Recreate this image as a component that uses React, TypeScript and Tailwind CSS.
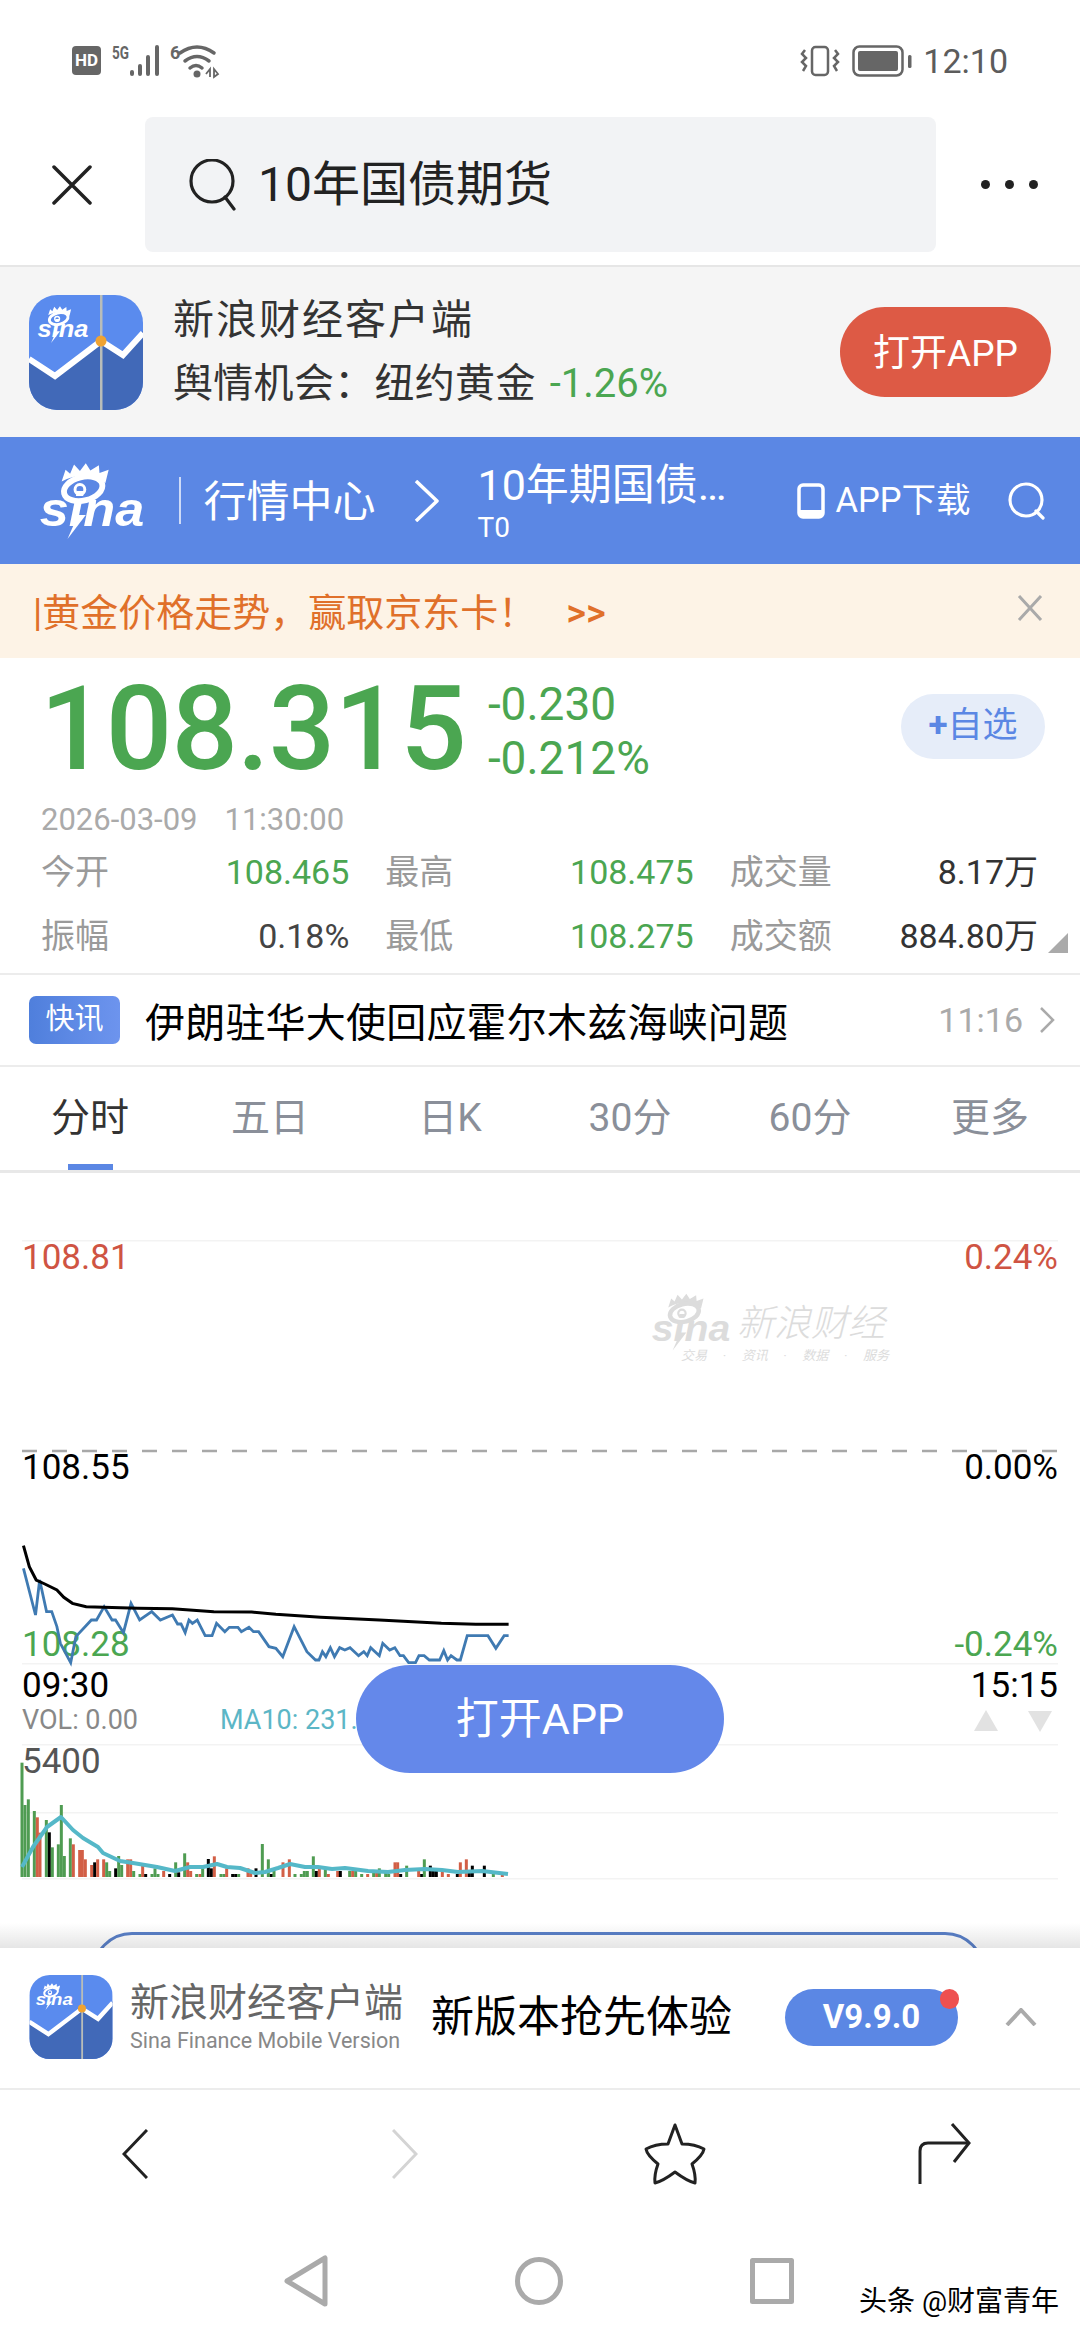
import React from 'react'

const GREEN = '#4ba651'

// chart points are read off the 2.9x / 3x crops, mapped back to page pixels
const pricePts = [[68,265],[103,405],[115,300],[135,395],[150,395],[165,440],[175,490],[205,548],[220,470],[265,420],[280,420],[302,380],[325,420],[335,420],[358,458],[380,370],[405,420],[440,395],[465,420],[500,405],[515,432],[525,432],[537,458],[548,420],[558,430],[572,420],[595,467],[615,467],[628,430],[652,455],[665,442],[690,442],[700,455],[722,442],[735,455],[750,455],[780,500],[800,505],[820,530],[853,440],[890,515],[915,540],[925,540],[935,515],[945,530],[958,503],[970,530],[985,503],[1000,510],[1015,503],[1040,527],[1055,515],[1065,527],[1075,503],[1100,527],[1110,490],[1130,510],[1145,503],[1160,527],[1170,527],[1185,548],[1205,548],[1215,527],[1230,527],[1245,540],[1275,540],[1287,512],[1298,540],[1308,527],[1325,540],[1335,540],[1355,467],[1415,467],[1438,505],[1462,467],[1475,467]]
const avgPts = [[68,197],[85,260],[105,300],[130,312],[165,330],[185,352],[210,370],[250,380],[300,382],[400,385],[500,386],[620,395],[730,396],[800,403],[930,412],[1100,420],[1280,430],[1380,433],[1475,433]]
const toLine = (pts: number[][]) => pts.map(([x, y]) => `${x / 2.9},${1480 + y / 3}`).join(' ')

const volLeft: [number, number, string][] = [[66,68,'g'],[75,195,'g'],[85,178,'g'],[103,213,'g'],[112,232,'r'],[120,278,'r'],[139,240,'g'],[148,277,'k'],[157,322,'g'],[175,313,'g'],[184,195,'g'],[193,348,'g'],[211,295,'g'],[220,313,'r'],[239,330,'r'],[247,330,'r'],[256,358,'r'],[275,375,'r'],[284,367,'k'],[293,358,'r'],[311,358,'r'],[320,367,'g'],[329,393,'g'],[347,385,'k'],[356,348,'g'],[365,375,'g'],[383,358,'r'],[392,358,'r'],[401,393,'g'],[420,402,'g'],[428,378,'r'],[437,402,'k'],[456,402,'g'],[465,385,'g'],[474,402,'g'],[491,393,'r'],[509,402,'k'],[527,367,'g'],[536,397,'k'],[554,340,'g'],[563,367,'r'],[572,393,'r'],[590,402,'g'],[600,402,'r'],[608,385,'g'],[625,357,'k'],[634,385,'k'],[643,349,'r'],[663,402,'g'],[672,402,'g'],[680,385,'r'],[698,402,'k'],[707,402,'k'],[716,402,'g'],[744,385,'r'],[752,393,'r']]
const volRight: [number, number, string][] = [[3,385,'k'],[22,312,'g'],[40,358,'g'],[49,402,'k'],[57,393,'g'],[84,367,'r'],[103,358,'r'],[120,402,'g'],[139,402,'g'],[148,393,'g'],[157,393,'g'],[175,349,'g'],[184,393,'k'],[193,385,'r'],[211,385,'g'],[220,402,'r'],[248,393,'r'],[256,393,'k'],[284,393,'g'],[293,393,'r'],[302,393,'g'],[320,402,'g'],[338,402,'r'],[356,393,'g'],[365,393,'r'],[373,385,'g'],[392,393,'g'],[401,402,'g'],[420,367,'r'],[428,367,'r'],[437,402,'k'],[455,377,'g'],[491,393,'r'],[500,402,'k'],[508,358,'g'],[526,377,'k'],[535,393,'k'],[544,393,'k'],[562,393,'r'],[580,402,'r'],[607,402,'k'],[616,367,'r'],[634,358,'r'],[643,393,'k'],[652,377,'k'],[688,377,'k'],[715,402,'g'],[742,402,'r']]
const volColor: Record<string, string> = { g: '#4f9c52', r: '#d25f46', k: '#000000' }
const volBars = [
  ...volLeft.map(([x, top, c]) => ({ x: x / 3, top, c })),
  ...volRight.map(([x, top, c]) => ({ x: 255 + x / 3, top, c })),
]
const maPts = [[22,1867],[33,1847],[47,1827],[61,1817],[73,1830],[83,1838],[98,1847],[103,1853],[120,1861],[133,1863],[157,1867],[175,1871],[190,1867],[203,1867],[217,1864],[227,1867],[240,1868],[255,1873],[265,1872],[278,1868],[290,1864],[305,1867],[318,1867],[332,1869],[345,1868],[368,1871],[388,1872],[405,1870],[425,1869],[442,1870],[458,1872],[482,1871],[508,1874]]

const SinaLogo = (props: React.SVGProps<SVGSVGElement>) => (
  <svg viewBox="45 25 340 245" fill="currentColor" {...props}>
    <path d="M122 88 L134 52 L148 64 L160 36 L178 56 L196 32 L210 54 L236 38 L238 62 L266 52 L256 92 Q190 50 122 88Z" />
    <ellipse cx="188" cy="110" rx="60" ry="36" fill="none" stroke="currentColor" strokeWidth="18" transform="rotate(-14 188 110)" />
    <circle cx="178" cy="112" r="15" fill="none" stroke="currentColor" strokeWidth="9" />
    <path d="M172 190 L140 264 L196 190Z" />
    <text x="55" y="224" fontFamily="'Liberation Sans',sans-serif" fontWeight="700" fontStyle="italic" fontSize="150" textLength="320" lengthAdjust="spacingAndGlyphs">sina</text>
  </svg>
)

const AppIcon = ({ className }: { className: string }) => (
  <svg viewBox="0 0 114 115" className={className}>
    <defs>
      <clipPath id="sq"><rect width="114" height="115" rx="28" /></clipPath>
    </defs>
    <g clipPath="url(#sq)">
      <rect width="114" height="115" fill="#5a8bee" />
      <polygon points="0,64 26,81 72,46 94,58 114,36 114,115 0,115" fill="#4169b8" />
      <polyline points="0,64 26,81 72,46 94,60 114,38" fill="none" stroke="#fff" strokeWidth="6" />
      <rect x="71" width="2.5" height="115" fill="#b8bdb9" />
      <circle cx="72" cy="46" r="5.5" fill="#f0a332" />
    </g>
    <SinaLogo x="7" y="10" width="54" height="39" color="#fff" />
  </svg>
)

function StatusBar() {
  return (
    <div className="h-[105px] shrink-0 flex items-center justify-between pl-[72px] pr-[72px] pt-[16px] text-[#666]">
      <div className="flex items-center">
        <div className="w-[29px] h-[29px] rounded-[4px] bg-[#666] text-white text-[17px] leading-none font-bold flex items-center justify-center">HD</div>
        <svg width="116" height="36" viewBox="0 0 116 36" className="ml-[9px] overflow-visible" fill="#666">
          <text x="2" y="16" fontSize="18" fontWeight="700" fontFamily="Roboto" textLength="17" lengthAdjust="spacingAndGlyphs">5G</text>
          <rect x="20" y="27" width="4" height="6" rx="2" />
          <rect x="28" y="21" width="4" height="12" rx="2" />
          <rect x="36" y="12" width="4" height="21" rx="2" />
          <rect x="45" y="2" width="4" height="31" rx="2" />
          <text x="60" y="16" fontSize="18" fontWeight="700" fontFamily="Roboto">6</text>
          <path d="M70 10 Q87 -2 104 10 M75 18 Q87 9 99 18 M80 25 Q86 20 92 25" fill="none" stroke="#666" strokeWidth="3.5" strokeLinecap="round" />
          <circle cx="87" cy="31" r="3.5" />
          <path d="M96 31 L100 26 V34 M104 26 V34 L108 31Z" fill="none" stroke="#666" strokeWidth="1.8" />
        </svg>
      </div>
      <div className="flex items-center">
        <svg width="40" height="32" viewBox="0 0 40 32" fill="none" stroke="#666" strokeWidth="2.5">
          <rect x="12" y="2" width="16" height="28" rx="3.5" />
          <path d="M5 5 L2 9 L6 13 L2 17 L6 21 L3 26 M35 5 L38 9 L34 13 L38 17 L34 21 L37 26" />
        </svg>
        <svg width="60" height="32" viewBox="0 0 60 32" className="ml-[12px]">
          <rect x="1.5" y="1.5" width="49" height="29" rx="6" fill="none" stroke="#666" strokeWidth="2.5" />
          <rect x="6" y="6" width="40" height="20" rx="2" fill="#666" />
          <rect x="56" y="10" width="3.5" height="13" rx="1.5" fill="#666" />
        </svg>
        <span className="ml-[11px] text-[34px] leading-none text-[#5c5c5c]">12:10</span>
      </div>
    </div>
  )
}

function Toolbar() {
  return (
    <div className="h-[162px] shrink-0 flex items-start pt-[12px] border-b-2 border-[#e6e6e6]">
      <div className="w-[145px] h-[135px] flex items-center pl-[52px]">
        <svg width="40" height="40" viewBox="0 0 40 40" stroke="#222" strokeWidth="3.5" strokeLinecap="round">
          <path d="M2 2 L38 38 M38 2 L2 38" />
        </svg>
      </div>
      <div className="w-[791px] h-[135px] rounded-[8px] bg-[#f2f3f5] flex items-center pl-[44px]">
        <svg width="48" height="52" viewBox="0 0 48 52" fill="none" stroke="#222" strokeWidth="3.2">
          <circle cx="23" cy="22" r="21" />
          <path d="M36 38 L45 50" strokeLinecap="round" />
        </svg>
        <span className="ml-[21px] text-[48px] leading-none text-[#222]">10年国债期货</span>
      </div>
      <div className="flex-1 h-[135px] flex items-center justify-center gap-[15px] pl-[2px]">
        <i className="w-[9px] h-[9px] rounded-full bg-[#222]" />
        <i className="w-[9px] h-[9px] rounded-full bg-[#222]" />
        <i className="w-[9px] h-[9px] rounded-full bg-[#222]" />
      </div>
    </div>
  )
}

function AppBanner() {
  return (
    <div className="h-[170px] shrink-0 bg-[#f5f5f5] flex items-center pl-[29px] pr-[29px]">
      <AppIcon className="w-[114px] h-[115px] shrink-0" />
      <div className="ml-[30px] flex-1 text-[#333]">
        <div className="text-[41px] leading-[52px] tracking-[2px]">新浪财经客户端</div>
        <div className="mt-[12px] text-[40px] tracking-[0.3px] leading-[52px] flex items-center">
          舆情机会{'\uFF1A'}纽约黄金
          <span className="ml-[14px] text-[40px] tracking-normal" style={{ color: GREEN }}>-1.26%</span>
        </div>
      </div>
      <div className="w-[211px] h-[90px] rounded-[45px] bg-[#dd5a45] text-white text-[37px] flex items-center justify-center pt-[4px]">打开APP</div>
    </div>
  )
}

function SiteHeader() {
  return (
    <div className="h-[127px] shrink-0 bg-[#5b87e4] text-white flex items-center pl-[36px]">
      <SinaLogo className="w-[112px] h-[80px] shrink-0" />
      <div className="ml-[31px] w-[1.5px] h-[47px] bg-white/70" />
      <span className="ml-[23px] text-[43px] leading-none pt-[3px]">行情中心</span>
      <svg width="26" height="42" viewBox="0 0 26 42" fill="none" stroke="#fff" strokeWidth="3.5" className="ml-[38px]">
        <path d="M2 1 L23 21 L2 41" strokeLinejoin="round" />
      </svg>
      <div className="ml-[38px] w-[252px] shrink-0 pt-[3px]">
        <div className="text-[43px] leading-[48px] whitespace-nowrap">10年期国债…</div>
        <div className="text-[28px] leading-[30px] mt-[4px]">T0</div>
      </div>
      <svg width="28" height="36" viewBox="0 0 28 36" fill="none" className="ml-[67px]">
        <rect x="2" y="2" width="24" height="32" rx="4" stroke="#fff" strokeWidth="3.5" />
        <rect x="2" y="27" width="24" height="7" fill="#fff" />
      </svg>
      <span className="ml-[11px] text-[34.5px] leading-none whitespace-nowrap">APP下载</span>
      <svg width="38" height="38" viewBox="0 0 38 38" fill="none" stroke="#fff" strokeWidth="3.2" className="ml-[37px]">
        <circle cx="18" cy="18" r="16" />
        <path d="M28 29 L35 36" strokeLinecap="round" />
      </svg>
    </div>
  )
}

function NoticeBar() {
  return (
    <div className="h-[94px] shrink-0 bg-[#fdf3e6] flex items-center pl-[33px] pr-[37px] justify-between">
      <span className="text-[38px] leading-none text-[#e0702a] whitespace-nowrap pt-[4px]">|黄金价格走势{'\uFF0C'}赢取京东卡{'\uFF01'}<span className="ml-[30px] text-[38px] font-medium">&gt;&gt;</span></span>
      <svg width="26" height="26" viewBox="0 0 26 26" stroke="#aaa" strokeWidth="3" className="-mt-[6px]">
        <path d="M2 1 L24 25 M24 1 L2 25" />
      </svg>
    </div>
  )
}

const Stat = ({ label, value, color }: { label: string; value: string; color: string }) => (
  <div className="flex items-center justify-between h-[64px]">
    <span className="text-[34px] leading-none text-[#9a9a9a]">{label}</span>
    <span className="text-[34px] leading-none" style={{ color }}>{value}</span>
  </div>
)

function Quote() {
  return (
    <div className="h-[315px] shrink-0 relative flex flex-col">
      <div className="h-[140px] flex items-center pl-[40px] pr-[35px] pt-[2px]">
        <span className="text-[117px] leading-none font-medium tracking-[-0.8px]" style={{ color: GREEN }}>108.315</span>
        <div className="ml-[22px] flex-1 text-[46px] leading-[54px] pt-[4px]" style={{ color: GREEN }}>
          <div>-0.230</div>
          <div>-0.212%</div>
        </div>
        <div className="w-[144px] h-[65px] -mt-[6px] rounded-[33px] bg-[#e6edf9] text-[#5b87e4] text-[35px] flex items-center justify-center">
          <span className="font-bold">+</span>自选
        </div>
      </div>
      <div className="h-[42px] flex items-center pl-[41px] text-[31px] text-[#aaa] leading-none">
        <span>2026-03-09</span>
        <span className="ml-[27px]">11:30:00</span>
      </div>
      <div className="grid grid-cols-3 gap-x-[36px] pl-[41px] pr-[42px]">
        <Stat label="今开" value="108.465" color={GREEN} />
        <Stat label="最高" value="108.475" color={GREEN} />
        <Stat label="成交量" value="8.17万" color="#333" />
        <Stat label="振幅" value="0.18%" color="#444" />
        <Stat label="最低" value="108.275" color={GREEN} />
        <Stat label="成交额" value="884.80万" color="#333" />
      </div>
      <svg width="20" height="20" viewBox="0 0 20 20" className="absolute left-[1048px] top-[275px]">
        <polygon points="20,0 20,20 0,20" fill="#aaa" />
      </svg>
    </div>
  )
}

function NewsRow() {
  return (
    <div className="h-[92px] shrink-0 border-t-2 border-[#ececec] flex items-center pl-[29px] pr-[25px]">
      <div className="w-[91px] h-[48px] rounded-[7px] bg-gradient-to-r from-[#4f7fdc] to-[#6d94ee] text-white text-[29px] flex items-center justify-center">快讯</div>
      <span className="ml-[25px] flex-1 text-[40px] tracking-[0.2px] leading-none text-black pt-[8px]">伊朗驻华大使回应霍尔木兹海峡问题</span>
      <span className="text-[34px] leading-none text-[#aaa]">11:16</span>
      <svg width="16" height="26" viewBox="0 0 16 26" fill="none" stroke="#aaa" strokeWidth="2.5" className="ml-[16px]">
        <path d="M2 1 L14 13 L2 25" />
      </svg>
    </div>
  )
}

const tabs = ['分时', '五日', '日K', '30分', '60分', '更多']

function Tabs() {
  return (
    <div className="h-[108px] shrink-0 border-t-2 border-[#ececec] border-b-[3px] border-b-[#e8e8e8] grid grid-cols-6">
      {tabs.map((t, i) => (
        <div key={t} className={`relative flex items-center justify-center text-[39px] leading-none ${i === 0 ? 'text-[#333]' : 'text-[#8a8f99]'}`}>
          {t}
          {i === 0 && <div className="absolute bottom-0 left-[68px] w-[45px] h-[6px] bg-[#5b87e4]" />}
        </div>
      ))}
    </div>
  )
}

function Chart() {
  const label = 'absolute text-[35px] leading-[40px]'
  return (
    <div className="relative h-[775px] shrink-0 overflow-hidden">
      <span className={`${label} left-[22px] top-[65px] text-[#cf5443]`}>108.81</span>
      <span className={`${label} right-[22px] top-[65px] text-[#cf5443]`}>0.24%</span>
      <span className={`${label} left-[22px] top-[275px] text-black`}>108.55</span>
      <span className={`${label} right-[22px] top-[275px] text-black`}>0.00%</span>
      <span className={`${label} left-[22px] top-[452px] text-[#4ba651]`}>108.28</span>
      <span className={`${label} right-[22px] top-[452px] text-[#4ba651]`}>-0.24%</span>
      <span className={`${label} left-[22px] top-[493px] text-black`}>09:30</span>
      <span className={`${label} right-[22px] top-[493px] text-black`}>15:15</span>
      <span className="absolute left-[22px] top-[527px] text-[27px] leading-[40px] text-[#888]">VOL: 0.00</span>
      <span className="absolute left-[220px] top-[527px] text-[27px] leading-[40px] text-[#5cb6c6]">MA10: 231.88</span>
      <span className={`${label} left-[22px] top-[569px] text-[#555]`}>5400</span>

      <svg viewBox="0 1173 1080 775" className="absolute inset-0 w-full h-full">
        {[1240, 1663, 1744, 1812, 1878].map((y) => (
          <rect key={y} x="22" y={y} width="1036" height="1.5" fill="#f3f3f3" />
        ))}
        <line x1="22" y1="1451" x2="1058" y2="1451" stroke="#a8a8a8" strokeWidth="2.5" strokeDasharray="15 15" />
        <polyline points={toLine(pricePts)} fill="none" stroke="#3f7ab2" strokeWidth="2.8" />
        <polyline points={toLine(avgPts)} fill="none" stroke="#000" strokeWidth="3" />
        {volBars.map((b, i) => (
          <rect key={i} x={b.x - 1.5} y={1740 + b.top / 3} width="3" height={1877 - (1740 + b.top / 3)} fill={volColor[b.c]} />
        ))}
        <polyline points={maPts.map((p) => p.join(',')).join(' ')} fill="none" stroke="#55b8c8" strokeWidth="4" strokeLinejoin="round" />
        <polygon points="986,1710 998,1731 974,1731" fill="#e2e2e2" />
        <polygon points="1028,1711 1052,1711 1040,1732" fill="#e2e2e2" />
      </svg>

      <div className="absolute left-[649px] top-[119px] w-[240px] text-[#dcdcdc]">
        <div className="flex items-end">
          <SinaLogo className="w-[84px] h-[60px] shrink-0" />
          <span className="ml-[4px] text-[37px] leading-none italic font-light whitespace-nowrap pb-[10px]">新浪财经</span>
        </div>
        <div className="absolute left-[32px] top-[57px] w-[208px] flex justify-between text-[13px] leading-none italic whitespace-nowrap">
          <span>交易</span><span>·</span><span>资讯</span><span>·</span><span>数据</span><span>·</span><span>服务</span>
        </div>
      </div>

      <div className="absolute left-[356px] top-[492px] w-[368px] h-[108px] rounded-[54px] bg-[#6488ea] text-white text-[43px] leading-none flex items-center justify-center">打开APP</div>

      <div className="absolute left-[92px] top-[759px] w-[893px] h-[80px] rounded-[44px] border-[3px] border-[#5a80c8]" />
      <div className="absolute left-0 bottom-0 w-full h-[25px] bg-gradient-to-b from-transparent to-black/10" />
    </div>
  )
}

function PromoBar() {
  return (
    <div className="h-[142px] shrink-0 bg-white border-b-2 border-[#ececec] flex items-center pl-[29px] pb-[2px]">
      <AppIcon className="w-[84px] h-[84px] shrink-0" />
      <div className="ml-[17px] w-[276px] shrink-0">
        <div className="text-[39px] leading-[44px] text-[#666] whitespace-nowrap">新浪财经客户端</div>
        <div className="text-[21.5px] leading-[26px] mt-[3px] text-[#888] whitespace-nowrap">Sina Finance Mobile Version</div>
      </div>
      <span className="ml-[25px] text-[43px] leading-none text-black whitespace-nowrap">新版本抢先体验</span>
      <div className="relative ml-[53px] w-[173px] h-[57px] rounded-[29px] bg-[#5b87e4] text-white text-[33px] font-bold flex items-center justify-center">
        V9.9.0
        <i className="absolute right-[-1px] top-0 w-[19px] h-[20px] rounded-full bg-[#ee5050]" />
      </div>
      <svg width="32" height="18" viewBox="0 0 32 18" fill="none" stroke="#aaa" strokeWidth="4" className="ml-[47px]">
        <path d="M2 17 L16 2 L30 17" />
      </svg>
    </div>
  )
}

function BrowserNav() {
  const cell = 'flex items-center justify-center'
  return (
    <div className="h-[132px] shrink-0 grid grid-cols-4 pb-[4px]">
      <div className={cell}>
        <svg width="26" height="50" viewBox="0 0 26 50" fill="none" stroke="#222" strokeWidth="3">
          <path d="M25 1 L2 25 L25 49" />
        </svg>
      </div>
      <div className={cell}>
        <svg width="26" height="50" viewBox="0 0 26 50" fill="none" stroke="#d4d4d4" strokeWidth="3">
          <path d="M1 1 L24 25 L1 49" />
        </svg>
      </div>
      <div className={cell}>
        <svg width="64" height="62" viewBox="0 0 64 62" fill="none" stroke="#222" strokeWidth="3" strokeLinejoin="round">
          <path d="M32 2 L39 21 Q52 21 61 26 Q60 32 49 41 Q53 52 52 60 Q44 58 32 49 Q20 58 12 60 Q11 52 15 41 Q4 32 3 26 Q12 21 25 21Z" />
        </svg>
      </div>
      <div className={cell}>
        <svg width="54" height="62" viewBox="0 0 54 62" fill="none" stroke="#222" strokeWidth="3">
          <path d="M2 61 V28 Q2 20 10 20 H50" />
          <path d="M34 1 L51 20 L36 39" />
        </svg>
      </div>
    </div>
  )
}

function SystemNav() {
  return (
    <div className="flex-1 flex items-center justify-center gap-[187px] pr-[2px]">
      <svg width="44" height="52" viewBox="0 0 44 52" fill="none" stroke="#aaa" strokeWidth="5" strokeLinejoin="round">
        <path d="M41 3 V49 L3 26Z" />
      </svg>
      <svg width="48" height="52" viewBox="0 0 48 52" fill="none" stroke="#aaa" strokeWidth="5">
        <circle cx="24" cy="26" r="21.5" />
      </svg>
      <svg width="44" height="46" viewBox="0 0 44 46" fill="none" stroke="#aaa" strokeWidth="5" strokeLinejoin="round">
        <rect x="2.5" y="2.5" width="39" height="41" />
      </svg>
    </div>
  )
}

export default function App() {
  return (
    <div className="relative w-[1080px] h-[2340px] overflow-hidden bg-white flex flex-col [font-family:Roboto,'Noto_Sans_CJK_SC',sans-serif]">
      <StatusBar />
      <Toolbar />
      <AppBanner />
      <SiteHeader />
      <NoticeBar />
      <Quote />
      <NewsRow />
      <Tabs />
      <Chart />
      <PromoBar />
      <BrowserNav />
      <SystemNav />
      <span className="absolute left-[859px] top-[2286px] text-[28px] leading-[32px] text-black whitespace-nowrap">头条 @财富青年</span>
    </div>
  )
}
